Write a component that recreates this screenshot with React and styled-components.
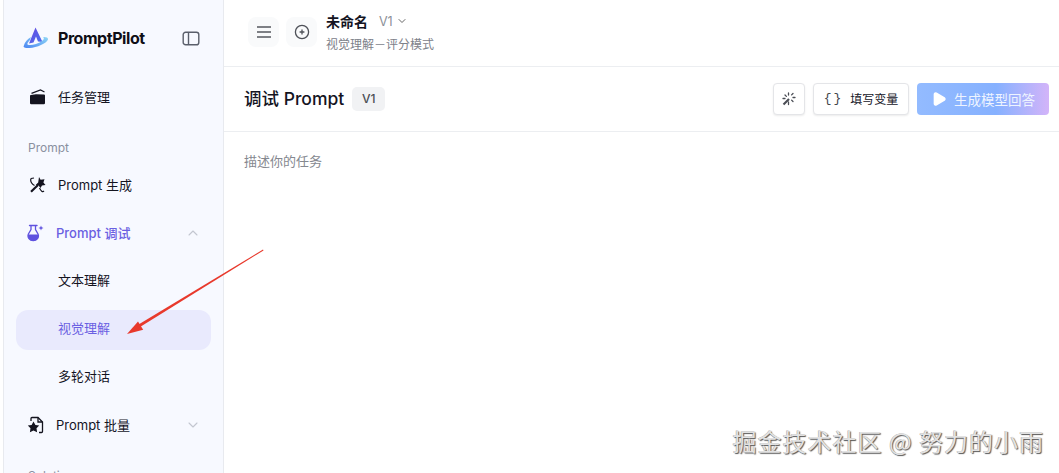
import React from 'react';
import styled, { createGlobalStyle } from 'styled-components';
import { ChevronDown, ChevronUp, Play } from 'lucide-react';

const Global = createGlobalStyle`
  html, body { margin: 0; padding: 0; height: 100%; overflow: hidden; background: #fff; }
  body { font-family: Inter, "Noto Sans CJK SC", sans-serif; color: #14141f; }
  #root { height: 100%; }
`;

const Page = styled.div`
  position: relative;
  width: 1059px;
  height: 473px;
  display: flex;
  overflow: hidden;
  background: #fff;
`;
const Sidebar = styled.aside`
  width: 221px;
  margin-left: 3px;
  flex: none;
  height: 473px;
  overflow: hidden;
  box-sizing: border-box;
  background: #f7f9ff;
  border-left: 1px solid #e8eaef;
  border-right: 1px solid #e8eaef;
  padding: 0 12px;
`;
const Brand = styled.div`
  height: 76px;
  margin-bottom: 2px;
  display: flex;
  align-items: center;
  padding: 0 11px 0 7px;
  gap: 9px;
`;
const BrandName = styled.div`
  flex: 1;
  font-size: 16px;
  font-weight: 700;
  letter-spacing: -0.45px;
  color: #0f0f17;
`;
const PanelBtn = styled.div`
  display: flex;
`;
const Nav = styled.nav`
  display: flex;
  flex-direction: column;
  gap: 8px;
`;
const Row = styled.div`
  height: 40px;
  flex: none;
  display: flex;
  align-items: center;
  box-sizing: border-box;
  border-radius: 12px;
  padding-left: ${p => p.$pad}px;
  padding-right: 10px;
  padding-bottom: ${p => (p.$sub ? 5 : 3)}px;
  gap: ${p => p.$gap || 10}px;
  font-size: 13px;
  color: ${p => (p.$active ? '#6a60e2' : '#14141f')};
  background: ${p => (p.$selected ? '#e9eafd' : 'transparent')};
  font-weight: ${p => (p.$strong ? 500 : 400)};
`;
const RowLabel = styled.span`
  flex: 1;
`;
const Caret = styled.span`
  display: flex;
  color: #c3c7d0;
`;
const Section = styled.div`
  font-size: 12px;
  color: #8a90a0;
  height: 32px;
  flex: none;
  box-sizing: border-box;
  padding: 12px 0 0 12px;
  line-height: 20px;
`;
const Main = styled.main`
  flex: 1;
  min-width: 0;
  display: flex;
  flex-direction: column;
`;
const TopBar = styled.header`
  height: 67px;
  flex: none;
  box-sizing: border-box;
  border-bottom: 1px solid #eceef1;
  display: flex;
  align-items: flex-start;
  padding: 12px 0 0 24px;
  gap: 7px;
`;
const IconTile = styled.div`
  width: 31px;
  height: 30px;
  margin-top: 5px;
  border-radius: 8px;
  background: #f9fafb;
  display: flex;
  align-items: center;
  justify-content: center;
  color: #55585f;
`;
const Titles = styled.div`
  margin-left: 2px;
  display: flex;
  flex-direction: column;
  gap: 6px;
`;
const TitleLine = styled.div`
  display: flex;
  align-items: center;
  height: 18px;
  font-size: 14px;
  font-weight: 700;
  color: #14141f;
`;
const Version = styled.span`
  font-weight: 400;
  font-size: 12.5px;
  color: #8b8f98;
  margin-left: 11px;
  margin-right: 3px;
`;
const SubTitle = styled.div`
  font-size: 12px;
  color: #7d818a;
  line-height: 18px;
`;
const ToolBar = styled.div`
  height: 65px;
  flex: none;
  box-sizing: border-box;
  border-bottom: 1px solid #eceef1;
  display: flex;
  align-items: center;
  padding: 0 10px 1px 20px;
`;
const Heading = styled.h1`
  margin: 0;
  font-size: 17.5px;
  line-height: 24px;
  font-weight: 500;
  color: #14141f;
`;
const Badge = styled.span`
  margin-left: 8px;
  width: 33px;
  height: 24px;
  border-radius: 5px;
  background: #f1f2f4;
  color: #4a4d55;
  font-size: 12px;
  font-weight: 500;
  display: flex;
  align-items: center;
  justify-content: center;
`;
const Actions = styled.div`
  margin-left: auto;
  display: flex;
  align-items: center;
  gap: 8px;
`;
const OutlineBtn = styled.div`
  height: 32px;
  box-sizing: border-box;
  width: ${p => p.$w}px;
  border: 1px solid #e4e5e8;
  border-radius: 4px;
  background: #fff;
  box-shadow: 0 1px 2px rgba(0, 0, 0, 0.08);
  display: flex;
  align-items: center;
  justify-content: center;
  gap: 7px;
  font-size: 12px;
  color: #14141f;
`;
const Braces = styled.span`
  font-family: "Liberation Mono", monospace;
  font-size: 13px;
  color: #44474e;
  letter-spacing: 2px;
`;
const GradientBtn = styled.div`
  width: 132px;
  height: 32px;
  border-radius: 4px;
  background: linear-gradient(90deg, #93bbff 0%, #86b1ff 60%, #d3b4f9 100%);
  color: #eef4ff;
  font-size: 13.5px;
  display: flex;
  align-items: center;
  justify-content: center;
  gap: 7px;
`;
const Prompt = styled.div`
  padding: 20px 20px;
  font-size: 13px;
  line-height: 18px;
  color: #85888f;
`;
const Watermark = styled.div`
  position: absolute;
  right: 15px;
  top: 425px;
  font-family: "Noto Sans CJK SC", sans-serif;
  font-size: 24px;
  line-height: 32px;
  letter-spacing: 1px;
  white-space: nowrap;
  color: #e2e2e2;
  text-shadow: 1px 1px 1px #555, -0.5px -0.5px 0 #aaa;
`;
const Arrow = styled.svg`
  position: absolute;
  left: 120px;
  top: 244px;
`;

const Logo = () => (
  <svg width="26" height="22" viewBox="0 0 26 22" fill="none">
    <defs>
      <linearGradient id="lg1" x1="0" y1="0" x2="1" y2="1">
        <stop offset="0" stopColor="#6a4be0" />
        <stop offset="1" stopColor="#4a70ee" />
      </linearGradient>
      <linearGradient id="lg2" x1="0" y1="1" x2="1" y2="0">
        <stop offset="0" stopColor="#4a85f2" />
        <stop offset="1" stopColor="#8fd8f5" />
      </linearGradient>
    </defs>
    <path d="M12.5 0.5 L19.5 15 L15 14.5 L13 9.5 L10.5 15.5 L6 16.5 Z" fill="url(#lg1)" />
    <path d="M0.5 19.5 C2 14.5 5 11.5 8 10 L7 13 C5 15 4 16.5 4.5 17.5 C7 19 14 17.5 19 14 C21 12.5 21.5 11 20 10 C23 9.8 25.5 10.5 25 12.5 C23.5 16.5 14 20.5 6.5 21 C3.5 21.2 1 20.8 0.5 19.5 Z" fill="url(#lg2)" />
  </svg>
);
const PanelIcon = () => (
  <svg width="18" height="15" viewBox="0 0 18 15" fill="none" stroke="#5a5f6b" strokeWidth="1.4">
    <rect x="1.2" y="1.2" width="15.6" height="12.6" rx="2.4" />
    <path d="M6.5 1.2 V13.8" />
  </svg>
);
const MenuGlyph = () => (
  <svg width="16" height="12" viewBox="0 0 16 12" fill="none" stroke="#55585f" strokeWidth="1.3">
    <path d="M1 1 H15 M1 6 H15 M1 11 H15" />
  </svg>
);
const AddGlyph = () => (
  <svg width="16" height="16" viewBox="0 0 16 16" fill="none" stroke="#4e5158" strokeWidth="1.3">
    <circle cx="8" cy="8" r="6.6" />
    <path d="M5.6 8 H10.4 M8 5.6 V10.4" />
  </svg>
);
const FolderIcon = () => (
  <svg width="18" height="16" viewBox="0 0 18 16">
    <path d="M1 7 L1 14 Q1 15.2 2.2 15.2 L14.8 15.2 Q16 15.2 16 14 L16 6.5 Q16 5.6 15 5.6 L7 5.2 L1.8 6 Q1 6.1 1 7 Z" fill="#14141f" />
    <path d="M2.5 4.4 L11.5 1 L15.5 3" fill="none" stroke="#14141f" strokeWidth="1.2" />
  </svg>
);
const WandIcon = () => (
  <svg width="18" height="18" viewBox="0 0 18 18" fill="none">
    <path d="M10 1 L11.6 3.8 L15.5 3.2 L14.4 6.6 L16.5 9 L13 9.6 L11.5 12 L9.6 9.4 L6.8 8.8 L9.2 6.4 Z" fill="#14141f" />
    <path d="M2 15.8 L9 9" stroke="#14141f" strokeWidth="2.2" />
    <path d="M2 2.5 C1 5.5 3 8 5.5 9.5 M10.5 12 C12 15 13.5 16.5 15 15" stroke="#14141f" strokeWidth="1.2" />
    <path d="M2 2.5 L5 2" stroke="#14141f" strokeWidth="1.2" />
  </svg>
);
const FlaskIcon = () => (
  <svg width="18" height="18" viewBox="0 0 18 18" fill="none">
    <path d="M2.5 1.5 H10" stroke="#5f52df" strokeWidth="1.4" strokeLinecap="round" />
    <path d="M4 2 V5.5 L1.4 10 C0 13.5 2.6 16.5 6.2 16.5 C9.9 16.5 12.5 13.5 11 10 L8.5 5.5 V2" stroke="#5f52df" strokeWidth="1.3" />
    <path d="M1.2 10.5 H11.2 C12 14 9.8 16.6 6.2 16.6 C2.6 16.6 0.4 14 1.2 10.5 Z" fill="#5f52df" />
    <path d="M14 1.5 L14.7 3.3 L16.5 4 L14.7 4.7 L14 6.5 L13.3 4.7 L11.5 4 L13.3 3.3 Z" fill="#5f52df" />
  </svg>
);
const BatchIcon = () => (
  <svg width="18" height="18" viewBox="0 0 18 18" fill="none">
    <path d="M4 5 V2.5 Q4 1.5 5 1.5 H11 L15.5 6 V15.5 Q15.5 16.5 14.5 16.5 H12" stroke="#14141f" strokeWidth="1.3" />
    <path d="M11 1.5 V6 H15.5" stroke="#14141f" strokeWidth="1.3" />
    <path d="M6.5 5.5 L8.4 9 L12.2 9.6 L9.5 12.3 L10.1 16.2 L6.5 14.4 L2.9 16.2 L3.5 12.3 L0.8 9.6 L4.6 9 Z" fill="#14141f" />
  </svg>
);
const SparkIcon = () => (
  <svg width="14" height="14" viewBox="0 0 14 14" fill="none" stroke="#4a4d55" strokeWidth="1.3">
    <path d="M1.5 12.5 L7 7" strokeWidth="2.2" />
    <path d="M6.5 1 V3 M11 5.5 H13 M3 3 L4.4 4.4 M11 1.5 L9.6 2.9 M11 9.5 L9.6 8.1 M1 6.5 H3 M6.5 10 V12.5" strokeLinecap="round" />
  </svg>
);

export default function App() {
  return (
    <Page>
      <Global />
      <Sidebar>
        <Brand>
          <Logo />
          <BrandName>PromptPilot</BrandName>
          <PanelBtn><PanelIcon /></PanelBtn>
        </Brand>
        <Nav>
          <Row $pad={13} $gap={11}><FolderIcon /><RowLabel>任务管理</RowLabel></Row>
          <Section>Prompt</Section>
          <Row $pad={13} $gap={11}><WandIcon /><RowLabel>Prompt 生成</RowLabel></Row>
          <Row $pad={11} $gap={11} $active $strong>
            <FlaskIcon /><RowLabel>Prompt 调试</RowLabel>
            <Caret><ChevronUp size={16} strokeWidth={1.6} /></Caret>
          </Row>
          <Row $pad={42} $sub><RowLabel>文本理解</RowLabel></Row>
          <Row $pad={42} $sub $active $selected><RowLabel>视觉理解</RowLabel></Row>
          <Row $pad={42} $sub><RowLabel>多轮对话</RowLabel></Row>
          <Row $pad={11} $gap={11}>
            <BatchIcon /><RowLabel>Prompt 批量</RowLabel>
            <Caret><ChevronDown size={16} strokeWidth={1.6} /></Caret>
          </Row>
          <Section>Solution</Section>
        </Nav>
      </Sidebar>
      <Main>
        <TopBar>
          <IconTile><MenuGlyph /></IconTile>
          <IconTile><AddGlyph /></IconTile>
          <Titles>
            <TitleLine>未命名<Version>V1</Version><ChevronDown size={12} color="#666" strokeWidth={2} /></TitleLine>
            <SubTitle>视觉理解－评分模式</SubTitle>
          </Titles>
        </TopBar>
        <ToolBar>
          <Heading>调试 Prompt</Heading>
          <Badge>V1</Badge>
          <Actions>
            <OutlineBtn $w={32}><SparkIcon /></OutlineBtn>
            <OutlineBtn $w={96}><Braces>{'{}'}</Braces>填写变量</OutlineBtn>
            <GradientBtn><Play size={16} fill="#fff" stroke="#fff" />生成模型回答</GradientBtn>
          </Actions>
        </ToolBar>
        <Prompt>描述你的任务</Prompt>
      </Main>
      <Arrow width="150" height="100" viewBox="0 0 150 100" fill="none">
        <path d="M143 5.6 L143.5 6.4 L20 83 L18.5 80.5 Z" fill="#e8392c" />
        <path d="M7 90 L18 77.4 L23.2 85.8 Z" fill="#e8392c" />
      </Arrow>
      <Watermark>掘金技术社区 @ 努力的小雨</Watermark>
    </Page>
  );
}
